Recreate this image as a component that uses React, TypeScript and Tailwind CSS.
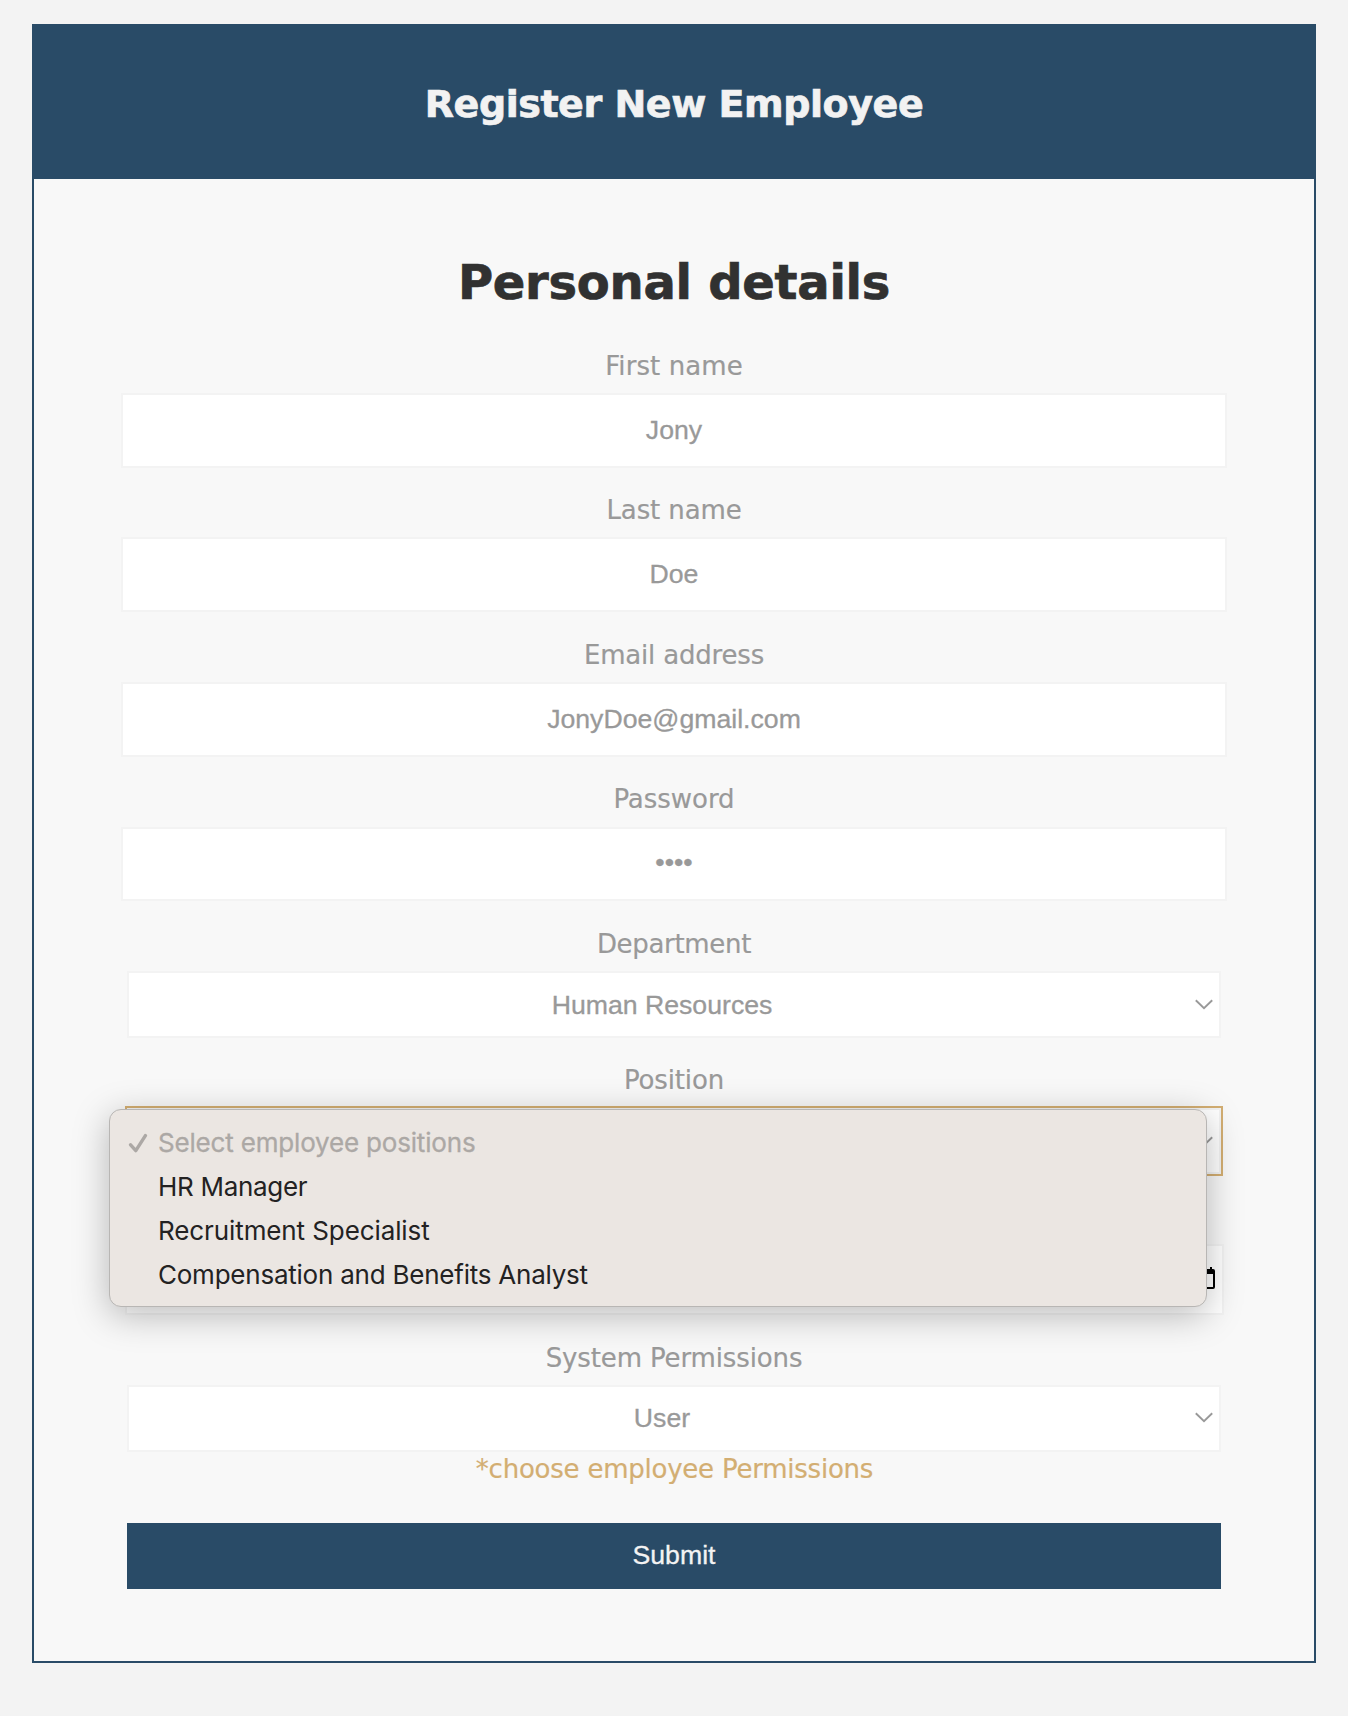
const LABEL =
  "block text-center font-['DejaVu_Sans',sans-serif] text-[26px] leading-[30px] text-[#999] [-webkit-text-stroke:0.2px]";
const CONTROL_TEXT =
  "text-center font-['Liberation_Sans',sans-serif] text-[26.667px] leading-[30px] text-[#999] [-webkit-text-stroke:0.3px]";

function Chevron() {
  return (
    <svg className="h-[11px] w-[18px] shrink-0" viewBox="0 0 18 11" fill="none">
      <path d="M0.8 1.2L9 9.2L17.2 1.2" stroke="#999" strokeWidth="1.9" />
    </svg>
  );
}

type FieldProps = {
  label: string;
  value: string;
  className: string;
  labelClass: string;
  boxClass: string;
};

function TextField({ label, value, className, labelClass, boxClass }: FieldProps) {
  return (
    <div className={className}>
      <label className={`${LABEL} ${labelClass}`}>{label}</label>
      <div className={`mx-[87px] border-2 border-[#f3f3f3] bg-white ${boxClass} ${CONTROL_TEXT}`}>{value}</div>
    </div>
  );
}

function Select({ value, className }: { value: string; className: string }) {
  return (
    <div className={`mx-[93px] flex border-2 border-[#f3f3f3] bg-white pr-1.5 ${className}`}>
      <div className={`flex-1 ${CONTROL_TEXT}`}>{value}</div>
      <div className="mt-[9px]">
        <Chevron />
      </div>
    </div>
  );
}

function PositionMenu() {
  return (
    <ul className="absolute -left-[18px] top-px z-10 h-[198px] w-[1098px] rounded-xl border border-[#b8b6b4] bg-[#ebe6e2] pt-[11px] font-['Inter',sans-serif] text-[26px] leading-[44px] text-[#232222] shadow-[0_8px_36px_rgba(0,0,0,0.27)]">
      <li className="flex items-center text-[#aca8a5] [-webkit-text-stroke:0.3px]">
        <svg className="ml-[18px] mr-[10px] h-5 w-5" viewBox="0 0 20 20" fill="none">
          <path d="M2.6 11.8L7.8 17.6L17.4 2.6" stroke="currentColor" strokeWidth="3.4" strokeLinecap="round" strokeLinejoin="round" />
        </svg>
        <span className="tracking-[-0.18px]">Select employee positions</span>
      </li>
      <li className="pl-12 tracking-[-0.3px]">HR Manager</li>
      <li className="pl-12 tracking-[-0.1px]">Recruitment Specialist</li>
      <li className="pl-12 tracking-[-0.23px]">Compensation and Benefits Analyst</li>
    </ul>
  );
}

export default function App() {
  return (
    <div className="h-[1716px] w-[1348px] bg-[#f3f3f3] px-8 pt-6">
      <main className="h-[1639px] border-2 border-[#294b67] bg-[#f8f8f8]">
        <header className="h-[153px] bg-[#294b67] pt-14 text-center">
          <h1 className="font-['DejaVu_Sans',sans-serif] text-[38px] font-bold leading-[44px] tracking-[-0.45px] text-[#f2f2f2] [-webkit-text-stroke:0.7px]">
            Register New Employee
          </h1>
        </header>
        <form>
          <h2 className="pt-[75px] text-center font-['DejaVu_Sans',sans-serif] text-[48px] font-bold leading-[56px] tracking-[-0.26px] text-[#313131] [-webkit-text-stroke:0.7px]">
            Personal details
          </h2>
          <TextField label="First name" value="Jony" className="mt-[41px]" labelClass="tracking-[0.1px]" boxClass="mt-3 h-[75px] pt-5" />
          <TextField label="Last name" value="Doe" className="mt-[27px]" labelClass="tracking-[-0.12px]" boxClass="mt-3 h-[75px] pt-5" />
          <TextField label="Email address" value="JonyDoe@gmail.com" className="mt-7" labelClass="tracking-[-0.18px]" boxClass="mt-3 h-[75px] pt-5" />
          <TextField label="Password" value="••••" className="mt-[27px]" labelClass="tracking-[-0.03px]" boxClass="mt-[13px] h-[74px] pt-[18px]" />

          <label className={`mt-7 tracking-[-0.31px] ${LABEL}`}>Department</label>
          <Select value="Human Resources" className="mt-3 h-[67px] pt-[17px]" />

          <label className={`mt-[27px] tracking-[-0.13px] ${LABEL}`}>Position</label>
          <div className="relative mx-[91px] mt-[11px] border-2 border-[#d3ae72]">
            <div className="flex h-[66px] justify-end border-2 border-[#f3f3f3] bg-white pr-1.5 pt-[26px]">
              <Chevron />
            </div>
            <div className="absolute left-0 top-0">
              <PositionMenu />
            </div>
          </div>

          <div className="ml-[91px] mr-[90px] mt-[68px] flex h-[71px] justify-end border-2 border-[#f3f3f3] bg-white pr-[7px] pt-[21px]">
            <svg className="h-[22px] w-[18px]" viewBox="0 0 18 22">
              <path d="M3 0h2v2h8V0h2v2h1a2 2 0 0 1 2 2v16a2 2 0 0 1-2 2H2a2 2 0 0 1-2-2V4a2 2 0 0 1 2-2h1zM2 7v13h14V7z" fill="#000" fillRule="evenodd" />
            </svg>
          </div>

          <label className={`mt-7 tracking-[-0.13px] ${LABEL}`}>System Permissions</label>
          <Select value="User" className="mt-3 h-[67px] pt-4" />
          <p className="mt-0.5 pl-px text-center font-['DejaVu_Sans',sans-serif] text-[26px] leading-[30px] tracking-[-0.23px] text-[#d3ae72] [-webkit-text-stroke:0.2px]">
            *choose employee Permissions
          </p>
          <button
            type="button"
            className="mx-[93px] mt-[39px] flex h-[66px] w-[1094px] justify-center bg-[#294b67] pt-[17px] font-['Liberation_Sans',sans-serif] text-[26.667px] leading-[30px] text-[#f3f3f3] [-webkit-text-stroke:0.3px]"
          >
            Submit
          </button>
        </form>
      </main>
    </div>
  );
}
